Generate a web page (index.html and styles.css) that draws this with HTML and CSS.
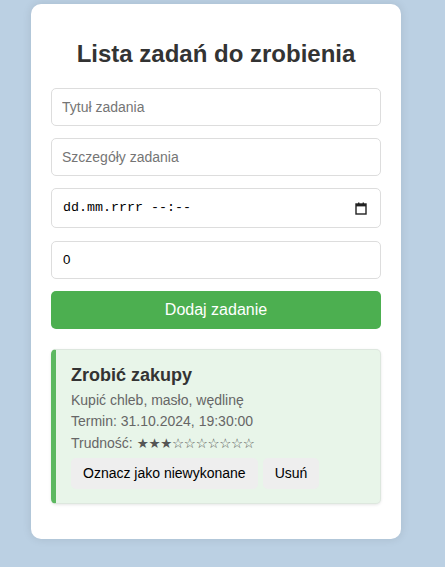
FILE: index.html
```html
<!DOCTYPE html>
<html lang="pl">
<head>
<meta charset="utf-8">
<title>Lista zadań</title>
<link rel="stylesheet" href="styles.css">
</head>
<body>
<div class="container">
  <h1 class="title">Lista zadań do zrobienia</h1>
  <input class="field" type="text" placeholder="Tytuł zadania">
  <input class="field" type="text" placeholder="Szczegóły zadania">
  <div class="field date-field">
    <span class="date-text">dd.mm.rrrr --:--</span>
    <svg class="cal-icon" width="12" height="13" viewBox="0 0 12 13" aria-hidden="true">
      <rect x="1" y="2" width="10" height="10" fill="none" stroke="#222" stroke-width="1.4"/>
      <rect x="1" y="2" width="10" height="2.4" fill="#222"/>
      <rect x="3" y="0.5" width="1.4" height="2" fill="#222"/>
      <rect x="7.6" y="0.5" width="1.4" height="2" fill="#222"/>
    </svg>
  </div>
  <input class="field number-field" type="text" value="0">
  <button class="add-btn">Dodaj zadanie</button>

  <div class="task">
    <h3 class="task-title">Zrobić zakupy</h3>
    <p class="task-line">Kupić chleb, masło, wędlinę</p>
    <p class="task-line">Termin: 31.10.2024, 19:30:00</p>
    <p class="task-line stars-line">Trudność: <span class="stars">★★★☆☆☆☆☆☆☆</span></p>
    <div class="task-actions">
      <button class="task-btn">Oznacz jako niewykonane</button>
      <button class="task-btn">Usuń</button>
    </div>
  </div>
</div>
</body>
</html>
```
FILE: styles.css
```css
* { box-sizing: border-box; }

html, body {
  margin: 0;
  background: #bbd0e3;
}

body {
  font-family: "Liberation Sans", Arial, sans-serif;
  padding: 4px 0 0 31px;
  min-height: 567px;
}

.container {
  width: 370px;
  background: #fff;
  border-radius: 10px;
  padding: 20px 20px 35px;
  box-shadow: 0 0 10px rgba(0, 0, 0, 0.1);
  display: flex;
  flex-direction: column;
}

.title {
  margin: 16px 0 20px;
  text-align: center;
  font-size: 24px;
  font-weight: bold;
  color: #333;
  line-height: 27.6px;
}

.field {
  display: block;
  width: 330px;
  height: 38px;
  margin: 0 0 12px;
  padding: 10px;
  border: 1px solid #ddd;
  border-radius: 5px;
  font-family: "Liberation Sans", Arial, sans-serif;
  font-size: 14px;
  color: #000;
  background: #fff;
  outline: none;
}

.field::placeholder { color: #757575; }

.date-field {
  height: 40px;
  display: flex;
  align-items: center;
  justify-content: space-between;
  padding: 0 13px 0 11px;
  margin-bottom: 13px;
}

.date-text {
  font-family: "Liberation Mono", "Courier New", monospace;
  font-size: 13.33px;
  color: #000;
}

.cal-icon { display: block; margin-top: 1px; }

.number-field {
  font-size: 13.33px;
  padding-left: 11px;
}

.add-btn {
  display: block;
  width: 330px;
  height: 38px;
  margin: 0;
  border: none;
  border-radius: 5px;
  background: #4caf50;
  color: #fff;
  font-family: "Liberation Sans", Arial, sans-serif;
  font-size: 16px;
  cursor: pointer;
}

.task {
  margin-top: 20px;
  background: #e8f5e9;
  border: 1px solid #dde7de;
  border-left: 5px solid #5cb860;
  border-radius: 5px;
  padding: 15px 15px 14px 15px;
  box-shadow: 0 1px 3px rgba(0, 0, 0, 0.1);
}

.task-title {
  margin: 0 0 6px;
  font-size: 18px;
  font-weight: bold;
  color: #333;
  line-height: 21px;
}

.task-line {
  margin: 0 0 5px;
  font-size: 14px;
  line-height: 16px;
  color: #666;
}

.stars-line {
  margin-top: 2px;
  margin-bottom: 6px;
  line-height: 18px;
}

.stars {
  font-family: "DejaVu Sans", sans-serif;
  font-size: 13.5px;
  letter-spacing: -0.3px;
  color: #555;
}

.task-actions {
  display: flex;
  gap: 5px;
}

.task-btn {
  border: none;
  border-radius: 5px;
  background: #eeeeee;
  color: #000;
  font-family: "Liberation Sans", Arial, sans-serif;
  font-size: 14px;
  line-height: 17px;
  padding: 7px 12px;
  cursor: pointer;
}
```
